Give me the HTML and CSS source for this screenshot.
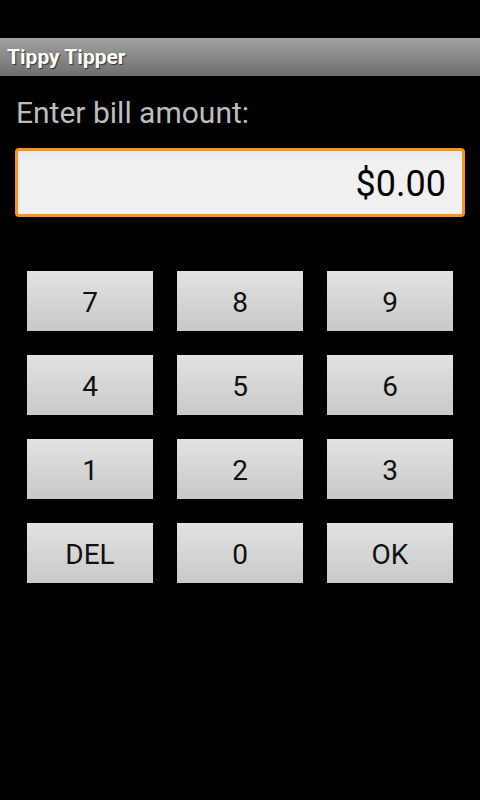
FILE: index.html
```html
<!DOCTYPE html>
<html>
<head>
<meta charset="utf-8">
<link rel="stylesheet" href="styles.css">
</head>
<body>
<div class="status"></div>
<div class="titlebar"><span class="title">Tippy Tipper</span></div>
<div class="content">
  <div class="label">Enter bill amount:</div>
  <div class="amount">$0.00</div>
  <div class="keypad">
    <div class="key">7</div><div class="key">8</div><div class="key">9</div>
    <div class="key">4</div><div class="key">5</div><div class="key">6</div>
    <div class="key">1</div><div class="key">2</div><div class="key">3</div>
    <div class="key">DEL</div><div class="key">0</div><div class="key">OK</div>
  </div>
</div>
</body>
</html>
```
FILE: styles.css
```css
html, body {
  margin: 0;
  padding: 0;
  background: #000;
  width: 480px;
  height: 800px;
  overflow: hidden;
  font-family: Roboto, "Noto Sans", sans-serif;
}
.status {
  height: 38px;
  background: #000;
}
.titlebar {
  height: 38px;
  background: linear-gradient(#a2a2a2, #6e6e6e);
  display: flex;
  align-items: center;
  padding-left: 7px;
}
.title {
  color: #fff;
  font-weight: bold;
  font-size: 21px;
  text-shadow: 1px 1px 1px rgba(0,0,0,0.6);
}
.content {
  padding: 0 15px;
}
.label {
  color: #bdbdbd;
  font-size: 30px;
  margin-top: 20px;
  padding-left: 1px;
  height: 34px;
  line-height: 34px;
}
.amount {
  margin-top: 18px;
  height: 63px;
  border: 3px solid #f7931e;
  border-radius: 4px;
  background: linear-gradient(#e8e8e8, #f0f0f0 15%, #f0f0f0);
  color: #000;
  font-size: 36px;
  display: flex;
  align-items: center;
  justify-content: flex-end;
  padding-right: 16px;
  padding-top: 3px;
  box-sizing: border-box;
  height: 69px;
}
.keypad {
  margin-top: 54px;
  padding: 0 12px;
  display: grid;
  grid-template-columns: repeat(3, 126px);
  column-gap: 24px;
  row-gap: 24px;
}
.key {
  height: 60px;
  box-sizing: border-box;
  padding-top: 3px;
  background: linear-gradient(#e2e2e2, #c9c9c9);
  color: #111;
  font-size: 28px;
  display: flex;
  align-items: center;
  justify-content: center;
}
```
